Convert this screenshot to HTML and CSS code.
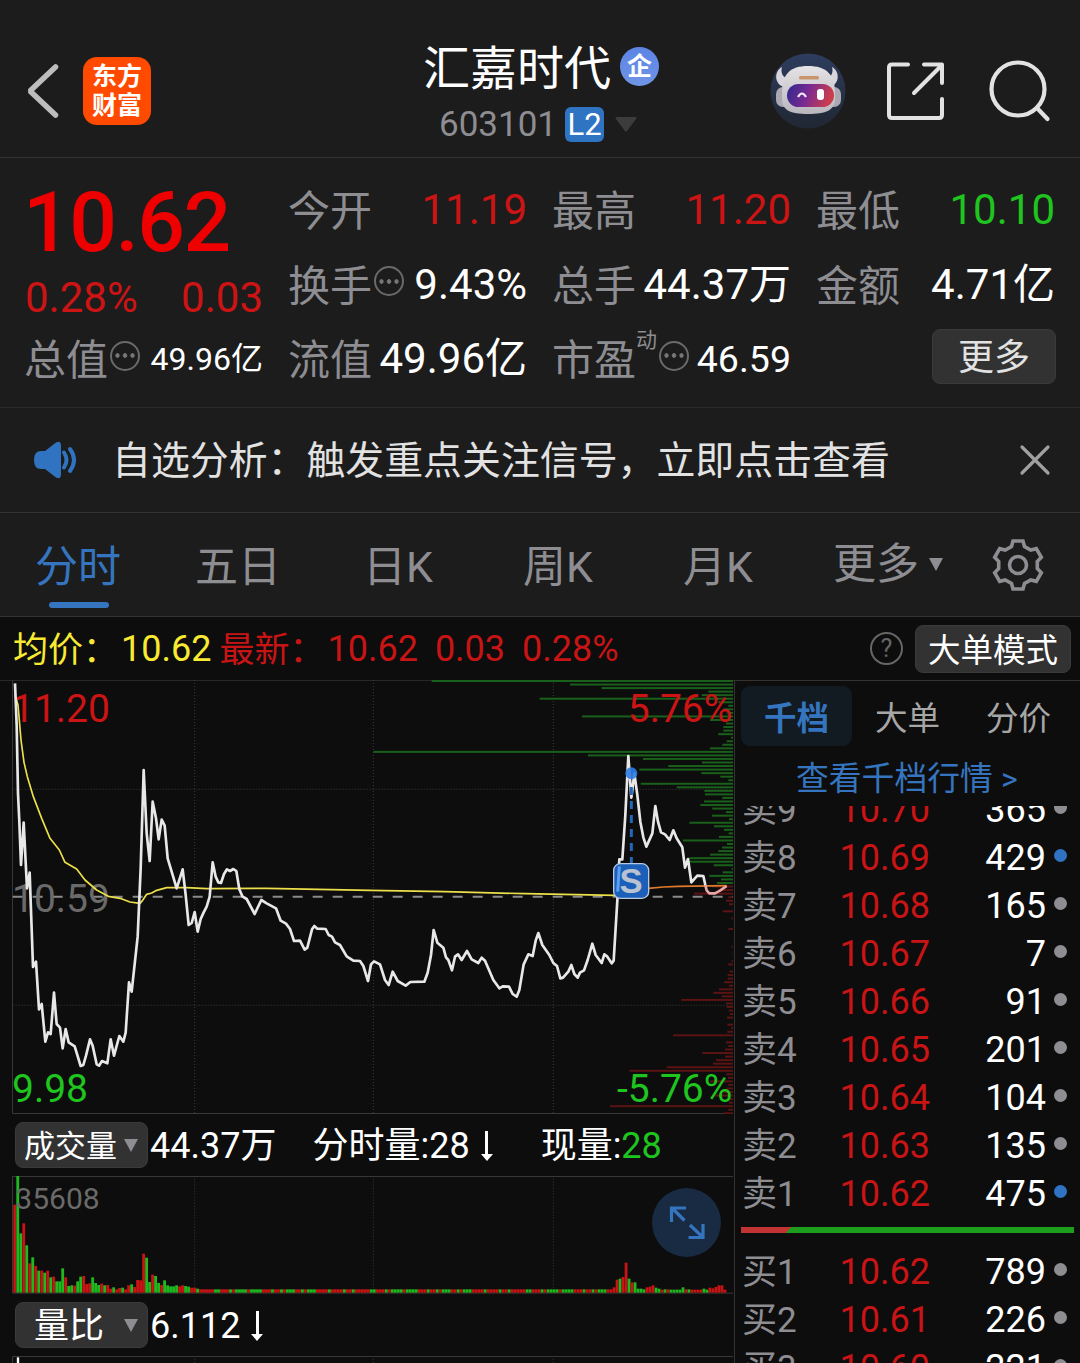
FILE: index.html
```html
<!DOCTYPE html>
<html lang="zh-CN">
<head>
  <meta charset="UTF-8">
  <meta name="viewport" content="width=device-width, initial-scale=1.0">
  <title>汇嘉时代 603101</title>
  <link rel="stylesheet" href="styles.css">
</head>
<body>
  <header class="header">
    <div class="header-left">
      <svg class="back" width="34" height="56" viewBox="0 0 34 56"><path d="M28.500 4 L3 28 L28.500 52" fill="none" stroke="#bdbdbd" stroke-width="5.500" stroke-linecap="round" stroke-linejoin="bevel"/></svg>
      <div class="logo"><span>东方</span><span>财富</span></div>
    </div>
    <div class="header-title">
      <div class="name-row">
        <h1>汇嘉时代</h1>
        <span class="badge">企</span>
      </div>
      <div class="code-row">
        <span class="code">603101</span>
        <span class="level">L2</span>
        <svg width="22" height="15" viewBox="0 0 22 15"><path d="M1 0H21Q22 1 21 2L12 14Q11 15 10 14L1 2Q0 1 1 0Z" fill="#3c3c3c"/></svg>
      </div>
    </div>
    <div class="header-actions">
      <svg width="76" height="76" viewBox="0 0 76 76">
        <defs>
          <linearGradient id="sky" x1="0" y1="0" x2="0" y2="1"><stop offset="0" stop-color="#2e3d5e"/><stop offset="1" stop-color="#202733"/></linearGradient>
          <linearGradient id="visor" x1="0" y1="0" x2="1" y2=".2"><stop offset="0" stop-color="#2c2a8c"/><stop offset=".5" stop-color="#7a2a92"/><stop offset="1" stop-color="#cc3d4c"/></linearGradient>
          <linearGradient id="helmet" x1="0" y1="0" x2="0" y2="1"><stop offset="0" stop-color="#e6e3e6"/><stop offset="1" stop-color="#b9b6be"/></linearGradient>
        </defs>
        <circle cx="38" cy="38" r="37.500" fill="url(#sky)"/>
        <path d="M12 14C4 18 4 31 14 34L21 26C14 26 10 21 12 14ZM62 14C70 18 70 31 60 34L53 26C60 26 64 21 62 14Z" fill="#d8d6dc"/>
        <rect x="6" y="34" width="14" height="20" rx="7" fill="#aaa9b1"/>
        <rect x="57" y="34" width="14" height="20" rx="7" fill="#aaa9b1"/>
        <path d="M12 40C12 21 20 13 38 13S65 21 65 40V46C65 57 56 61 38 61S12 57 12 46Z" fill="url(#helmet)"/>
        <rect x="29" y="23" width="20" height="3.500" rx="1.500" fill="#c9966c"/>
        <rect x="17" y="31" width="47" height="23" rx="11.500" fill="url(#visor)"/>
        <path d="M28 44Q32 37 36 44" fill="none" stroke="#f3e9ff" stroke-width="2.200"/>
        <rect x="47" y="36" width="7" height="11" rx="3" fill="#fff"/>
      </svg>
      <svg class="share" width="60" height="60" viewBox="0 0 60 60" fill="none" stroke="#e2e2e2" stroke-width="4" stroke-linecap="round" stroke-linejoin="round">
        <path d="M22 3.500H6Q3 3.500 3 6.500V54Q3 57 6 57H53Q56 57 56 54V38M38 3.500H56V22M56 4L28 32"/>
      </svg>
      <svg class="search" width="62" height="62" viewBox="0 0 62 62" fill="none" stroke="#e2e2e2" stroke-width="4.200" stroke-linecap="round">
        <circle cx="29" cy="29" r="26.500"/><path d="M48 48L58.500 59"/>
      </svg>
    </div>
  </header>

  <section class="quote">
    <div class="quote-col quote-main">
      <div class="price">10.62</div>
      <div class="row red"><span>0.28%</span><span>0.03</span></div>
      <div class="row"><span class="label">总值<i class="dots"></i></span><span class="value small">49.96亿</span></div>
    </div>
    <div class="quote-col">
      <div class="row"><span class="label">今开</span><span class="red">11.19</span></div>
      <div class="row"><span class="label">换手<i class="dots"></i></span><span class="value">9.43%</span></div>
      <div class="row"><span class="label">流值</span><span class="value">49.96亿</span></div>
    </div>
    <div class="quote-col">
      <div class="row"><span class="label">最高</span><span class="red">11.20</span></div>
      <div class="row"><span class="label">总手</span><span class="value">44.37万</span></div>
      <div class="row"><span class="label">市盈<sup>动</sup><i class="dots"></i></span><span class="value medium">46.59</span></div>
    </div>
    <div class="quote-col">
      <div class="row"><span class="label">最低</span><span class="green">10.10</span></div>
      <div class="row"><span class="label">金额</span><span class="value">4.71亿</span></div>
      <div class="row row-end"><button class="more">更多</button></div>
    </div>
  </section>

  <section class="notice">
    <svg width="46" height="38" viewBox="0 0 46 38">
      <path d="M8 10H12L23 1.500Q28 -1 28 5V33Q28 39 23 36.500L12 28H8Q1 28 1 19T8 10Z" fill="#3073c0"/>
      <path d="M31 11.500Q36 19 31 26.500M37 8Q45 19 37 30" fill="none" stroke="#3073c0" stroke-width="4" stroke-linecap="round"/>
    </svg>
    <p>自选分析：触发重点关注信号，立即点击查看</p>
    <svg class="close" width="32" height="32" viewBox="0 0 32 32"><path d="M3 3L29 29M29 3L3 29" stroke="#a0a0a0" stroke-width="3.200" stroke-linecap="round"/></svg>
  </section>

  <nav class="tabs">
    <a class="tab active">分时</a>
    <a class="tab">五日</a>
    <a class="tab">日K</a>
    <a class="tab">周K</a>
    <a class="tab">月K</a>
    <a class="tab tab-more">更多<i class="caret"></i></a>
    <svg class="gear" width="56" height="56" viewBox="-28 -28 56 56" fill="none" stroke="#8d8d92" stroke-width="3.600">
      <path d="M-5 -24H5L6.500 -18.500L12.800 -14.900L18.300 -16.300L23.300 -7.700L19.300 -3.600V3.600L23.300 7.700L18.300 16.300L12.800 14.900L6.500 18.500L5 24H-5L-6.500 18.500L-12.800 14.900L-18.300 16.300L-23.300 7.700L-19.300 3.600V-3.600L-23.300 -7.700L-18.300 -16.300L-12.800 -14.900L-6.500 -18.500Z"/>
      <circle r="8.500"/>
    </svg>
  </nav>

  <div class="strip">
    <span class="avg">均价：</span><span class="avg num">10.62</span>
    <span class="last">最新：</span><span class="last num">10.62</span><span class="last num">0.03</span><span class="last num">0.28%</span>
    <span class="help">?</span>
    <button class="mode">大单模式</button>
  </div>

  <main class="board">
    <div class="charts">
      <div class="chart price-chart">
        <!-- three user units per pixel -->
        <svg width="734" height="434" viewBox="0 15 2202 1302">
          <g class="grid">
            <path d="M584 15V1315M1120 15V1315M1660 15V1315M38 343H2199M38 991H2199"/>
          </g>
          <path class="frame" d="M0 15.500H2202M37.500 15V1315.500H2199"/>
          <g id="depth"></g>
          <path class="base" d="M38 665H2199"/>
          <text class="axis up" x="36" y="140">11.20</text>
          <text class="axis mid" x="36" y="710">10.59</text>
          <text class="axis down" x="36" y="1280">9.98</text>
          <polyline class="avg-line" points="45,60 54,90 63,195 72,262 82,305 100,365 125,430 150,490 178,525 195,562 230,582 255,615 290,645 325,664 360,670 390,681 420,685 428,676 440,658 455,654 470,646 500,638 560,638 620,641 800,640 1110,646 1335,650 1575,656 1845,661 1875,659 1905,647 1945,640"/>
          <polyline class="avg-line late" points="1945,640 1990,636 2035,634 2180,632"/>
          <polyline class="price-line" points="45,25 50,150 54,355 58,440 63,570 71,443 81,640 89,593 99,876 108,860 117,1003 125,987 136,1100 144,1072 152,1077 162,953 170,1047 180,1058 188,1120 197,1062 206,1102 224,1114 242,1173 250,1170 258,1142 270,1093 278,1112 290,1168 297,1172 306,1158 322,1165 332,1093 342,1142 358,1083 370,1100 377,1073 387,922 395,950 413,785 422,580 431,285 440,475 449,558 458,380 468,430 476,493 485,434 494,452 503,550 530,640 548,583 557,660 566,750 575,744 584,711 593,770 602,732 611,712 620,695 629,665 638,562 647,605 655,622 663,624 672,597 681,583 690,588 700,582 709,588 718,643 727,664 740,672 764,717 784,675 800,685 828,700 842,737 858,746 870,762 882,798 900,797 914,824 922,818 936,763 943,753 952,761 977,762 986,780 996,785 1005,802 1020,810 1040,844 1060,857 1080,858 1090,873 1104,918 1113,868 1122,859 1140,868 1155,915 1166,930 1178,890 1193,918 1217,932 1231,921 1273,920 1283,893 1293,840 1301,765 1312,803 1330,818 1338,847 1345,855 1356,886 1365,845 1374,838 1385,855 1401,828 1415,853 1435,864 1445,848 1455,857 1480,915 1498,940 1508,934 1527,935 1538,957 1550,965 1558,945 1571,868 1585,838 1598,843 1607,797 1615,774 1627,810 1648,840 1660,864 1671,873 1681,910 1689,908 1705,890 1714,870 1723,897 1733,908 1740,893 1752,886 1763,855 1777,806 1787,840 1805,864 1813,838 1822,845 1835,865 1841,857 1853,660 1858,553 1867,553 1876,420 1885,243 1894,368 1903,295 1912,360 1921,440 1930,487 1939,515 1957,475 1966,393 1974,440 1983,472 1995,478 2009,495 2020,466 2030,490 2047,517 2055,578 2064,552 2074,622 2092,602 2110,603 2116,630"/>
          <polyline class="price-line late" points="2116,630 2120,646 2128,655 2145,655 2160,647 2180,633"/>
          <text class="axis up end" x="2197" y="140">5.76%</text>
          <text class="axis down end" x="2197" y="1280">-5.76%</text>
          <!-- sell marker -->
          <path d="M1894 336V566" stroke="#2566b8" stroke-width="9" stroke-dasharray="24 18"/>
          <circle cx="1894" cy="295" r="18" fill="#2e7ce6" fill-opacity=".9"/>
          <rect x="1841" y="566" width="105" height="104" rx="20" fill="#1c5fb8" stroke="#b6c8e2" stroke-width="4"/>
          <path d="M1853 650L1858 574" stroke="#5c9df2" stroke-width="9"/>
          <text class="marker" x="1893" y="654">S</text>
        </svg>
      </div>

      <div class="indicator">
        <button class="picker">成交量<i class="caret"></i></button>
        <span class="figure">44.37万</span>
        <span class="figure minute">分时量:28</span><i class="arrow"></i>
        <span class="figure now">现量:<b>28</b></span>
      </div>

      <div class="chart volume-chart">
        <svg width="734" height="118" viewBox="0 0 2202 354">
          <path class="grid" d="M584 8V350M1120 8V350M1660 8V350"/>
          <path class="frame" d="M37.500 1.500H2199M37.500 0V351.500H2199"/>
          <g id="volume"></g>
          <text class="axis scale" x="46" y="98">35608</text>
        </svg>
        <div class="expand">
          <svg width="36" height="36" viewBox="0 0 36 36" fill="none" stroke="#3575bf" stroke-width="3.200"><path d="M2.500 17V3H17M3 3L15.500 15.500M19.500 32.500H34V19M33.500 32L21 20"/></svg>
        </div>
      </div>

      <div class="indicator second">
        <button class="picker wide">量比<i class="caret"></i></button>
        <span class="figure">6.112</span><i class="arrow near"></i>
      </div>

      <div class="chart ratio-chart">
        <svg width="734" height="8" viewBox="0 0 2202 24">
          <path class="grid" d="M584 8V24M1120 8V24M1660 8V24"/>
          <path class="frame" d="M37.500 24V1.500H2199"/>
          <path d="M54 4V24" stroke="#fff" stroke-width="7"/>
        </svg>
      </div>
    </div>

    <aside class="book">
      <div class="book-tabs">
        <a class="book-tab active">千档</a>
        <a class="book-tab">大单</a>
        <a class="book-tab">分价</a>
      </div>
      <a class="book-link">查看千档行情 <span>&gt;</span></a>
      <div class="orders sells">
        <div class="order"><span>卖9</span><span>10.70</span><span>365</span><i></i></div>
        <div class="order"><span>卖8</span><span>10.69</span><span>429</span><i class="big"></i></div>
        <div class="order"><span>卖7</span><span>10.68</span><span>165</span><i></i></div>
        <div class="order"><span>卖6</span><span>10.67</span><span>7</span><i></i></div>
        <div class="order"><span>卖5</span><span>10.66</span><span>91</span><i></i></div>
        <div class="order"><span>卖4</span><span>10.65</span><span>201</span><i></i></div>
        <div class="order"><span>卖3</span><span>10.64</span><span>104</span><i></i></div>
        <div class="order"><span>卖2</span><span>10.63</span><span>135</span><i></i></div>
        <div class="order"><span>卖1</span><span>10.62</span><span>475</span><i class="big"></i></div>
      </div>
      <div class="balance"></div>
      <div class="orders">
        <div class="order"><span>买1</span><span>10.62</span><span>789</span><i></i></div>
        <div class="order"><span>买2</span><span>10.61</span><span>226</span><i></i></div>
        <div class="order"><span>买3</span><span>10.60</span><span>221</span><i></i></div>
      </div>
    </aside>
  </main>

  <script src="charts.js"></script>
</body>
</html>
```

FILE: styles.css
```css
/* Base styling */
* {
  box-sizing: border-box;
}
body {
  margin: 0;
  width: 1080px;
  height: 1363px;
  overflow: hidden;
  background: #0d0d0d;
  color: #fff;
  font-family: Roboto, "Noto Sans CJK SC", sans-serif;
  font-size: 36px;
  line-height: 1;
}
h1, p {
  margin: 0;
  font-weight: 400;
}
button {
  border: 1px solid #3a3a3a;
  border-radius: 8px;
  padding: 0;
  background: #323232;
  color: #fff;
  font-family: inherit;
  line-height: 1;
}
svg {
  display: block;
  flex: none;
}
.red {
  color: #cc1414;
}
.green {
  color: #1fc41f;
}

/* Header */
.header {
  display: grid;
  grid-template-columns: 396px 344px 1fr;
  height: 158px;
  padding-left: 27px;
  background: #1c1c1c;
  border-bottom: 1px solid #333;
}
.header-left {
  display: flex;
  align-items: center;
  gap: 22px;
  padding-top: 24px;
}
.logo {
  display: flex;
  flex-direction: column;
  align-items: center;
  justify-content: center;
  gap: 4px;
  width: 68px;
  height: 68px;
  border-radius: 14px;
  background: #ff4a00;
  font-size: 25px;
  font-weight: 700;
}
.header-title {
  padding-top: 42px;
}
.name-row {
  display: flex;
  align-items: center;
  gap: 9px;
  height: 49px;
}
.name-row h1 {
  padding-top: 3px;
  font-size: 47px;
  white-space: nowrap;
}
.badge {
  width: 39px;
  height: 39px;
  border-radius: 50%;
  background: linear-gradient(#5b84e4, #7095e6);
  font-size: 25px;
  font-weight: 700;
  line-height: 39px;
  text-align: center;
}
.code-row {
  display: flex;
  align-items: center;
  height: 36px;
  margin-top: 15px;
  padding-left: 16px;
}
.code {
  width: 126px;
  padding-top: 1px;
  color: #8d8d92;
  font-size: 35px;
}
.level {
  width: 39px;
  height: 35px;
  margin-right: 11px;
  border-radius: 6px;
  background: #2f74c2;
  font-size: 31px;
  line-height: 36px;
  text-align: center;
}
.header-actions {
  display: flex;
  align-items: center;
  padding: 24px 0 0 3px;
}
.share {
  margin-left: 40px;
}
.search {
  margin-left: 43px;
}

/* Quote numbers */
.quote {
  display: grid;
  grid-template-columns: repeat(4, 238px);
  column-gap: 26px;
  height: 250px;
  padding: 15px 25px 0;
  background: #1c1c1c;
  border-bottom: 1px solid #2a2a2a;
  font-size: 42px;
}
.row {
  display: flex;
  align-items: center;
  justify-content: space-between;
  height: 74.500px;
  white-space: nowrap;
}
.row-end {
  justify-content: flex-end;
}
.label {
  display: flex;
  align-items: center;
  margin-left: -1px;
  padding-top: 4px;
  color: #8d8d92;
}
.label sup {
  align-self: flex-start;
  margin-top: -10px;
  font-size: 21px;
  line-height: 1;
}
.quote-main {
  padding-top: 6px;
}
.quote-main .row {
  height: 61.500px;
}
.price {
  height: 88px;
  margin-left: -2px;
  color: #ee0000;
  font-size: 84px;
  font-weight: 500;
  letter-spacing: -1.500px;
  line-height: 88px;
}
.small {
  font-size: 32px;
}
.medium {
  font-size: 37.500px;
}
.dots {
  width: 30px;
  height: 30px;
  margin: -11px 0 0 2px;
  border: 2.500px solid #6a6a6a;
  border-radius: 50%;
  background: radial-gradient(circle, #777 2px, transparent 2.500px) center / 7.500px 25px repeat-x;
  background-clip: content-box;
  padding: 0 2px;
}
.more {
  width: 124px;
  height: 55px;
  margin: -5px -1px 0 0;
  padding-top: 3px;
  color: #e2e2e2;
  font-size: 36px;
}

/* Notice */
.notice {
  display: flex;
  align-items: center;
  height: 105px;
  padding-left: 33px;
  background: #1c1c1c;
  border-bottom: 1px solid #333;
}
.notice p {
  width: 940px;
  padding: 3px 0 0 33px;
  color: #e2e2e2;
  font-size: 38.900px;
}

/* Period tabs */
.tabs {
  display: flex;
  align-items: center;
  height: 104px;
  background: #1c1c1c;
  border-bottom: 1px solid #333;
}
.tab {
  position: relative;
  width: 160px;
  height: 103px;
  color: #8d8d92;
  font-size: 43px;
  line-height: 109px;
  text-align: center;
}
.tab:first-child {
  margin-left: -2px;
}
.tab.active {
  color: #3575bf;
}
.tab.active::after {
  content: "";
  position: absolute;
  left: 51px;
  bottom: 8px;
  width: 60px;
  height: 6px;
  border-radius: 3px;
  background: #3575bf;
}
.tab-more {
  display: flex;
  align-items: center;
  padding-left: 35px;
  width: 192px;
}
.caret {
  width: 0;
  height: 0;
  border: 7.500px solid transparent;
  border-top: 13px solid #8d8d92;
  border-bottom: 0;
}
.tab-more .caret {
  margin-left: 10px;
}

/* Average and last price */
.strip {
  display: flex;
  align-items: center;
  height: 63px;
  padding-left: 13px;
  white-space: nowrap;
}
.avg {
  color: #f8ea32;
}
.last {
  color: #c81414;
}
.strip > span {
  padding-top: 3px;
  font-size: 35px;
}
.strip .num {
  margin-right: 17px;
  padding-top: 1px;
  font-size: 36px;
}
.strip .avg.num {
  margin: 0 8px 0 3px;
}
.strip .last:not(.num) {
  margin-right: 3px;
}
.strip .help {
  width: 33px;
  height: 33px;
  margin: 0 12px 0 auto;
  padding-top: 0;
  border: 2.500px solid #666;
  border-radius: 50%;
  color: #666;
  font-size: 25px;
  line-height: 29px;
  text-align: center;
}
.mode {
  width: 156px;
  height: 48px;
  margin-right: 9px;
  padding-top: 5px;
  font-size: 32.500px;
}

/* Charts */
.board {
  display: flex;
}
.charts {
  width: 735px;
  border-right: 1px solid #333;
}
.grid {
  fill: none;
  stroke: #3c3c3c;
  stroke-width: 3;
  stroke-dasharray: 3 6;
}
.frame {
  fill: none;
  stroke: #383838;
  stroke-width: 3;
}
.base {
  stroke: #8a8a8a;
  stroke-width: 6;
  stroke-dasharray: 30 30;
}
.price-line, .avg-line {
  fill: none;
  stroke: #e8e8e8;
  stroke-width: 8;
  stroke-linejoin: round;
}
.price-line.late {
  stroke: #e8a8a8;
}
.avg-line {
  stroke: #ece04a;
  stroke-width: 5;
}
.avg-line.late {
  stroke: #e07a2c;
}
.axis {
  font-size: 117px;
}
.axis.up {
  fill: #cc1414;
}
.axis.down {
  fill: #1fc41f;
}
.axis.mid, .axis.scale {
  fill: #6a6a6a;
}
.axis.end {
  text-anchor: end;
}
.axis.scale {
  font-size: 90px;
}
.marker {
  fill: #b9c2d0;
  font-family: "Liberation Sans", sans-serif;
  font-size: 104px;
  font-weight: 700;
  text-anchor: middle;
}
.indicator {
  display: flex;
  align-items: center;
  height: 62px;
  padding-left: 15px;
  white-space: nowrap;
}
.picker {
  display: flex;
  align-items: center;
  justify-content: space-between;
  width: 133px;
  height: 46px;
  margin-right: 2px;
  padding: 3px 9px 0 8px;
  font-size: 31px;
}
.picker .caret {
  margin-top: -3px;
}
.picker.wide {
  padding-left: 18px;
  font-size: 35px;
}
.figure {
  padding-top: 1px;
}
.figure.minute {
  margin-left: 36px;
}
.figure.now {
  margin-left: 48px;
}
.figure b {
  color: #1fc41f;
  font-weight: 400;
}
.arrow {
  position: relative;
  width: 12px;
  height: 32px;
  margin-left: 11px;
  background: linear-gradient(#fff, #fff) center / 3px 28px no-repeat;
}
.arrow::after {
  content: "";
  position: absolute;
  left: 0;
  bottom: 0;
  border: 6px solid transparent;
  border-top: 7px solid #fff;
  border-bottom: 0;
}
.volume-chart {
  position: relative;
}
.expand {
  position: absolute;
  left: 652px;
  top: 12px;
  display: flex;
  align-items: center;
  justify-content: center;
  width: 69px;
  height: 69px;
  border-radius: 50%;
  background: #182b42;
}

/* Order book */
.book {
  width: 345px;
  height: 683px;
  overflow: hidden;
  border-top: 1px solid #333;
}
.book-tabs {
  display: flex;
  padding: 5px 0 0 6px;
}
.book-tab {
  width: 111px;
  height: 60px;
  border-radius: 9px;
  color: #a6a6a6;
  font-size: 32.500px;
  line-height: 67px;
  text-align: center;
}
.book-tab.active {
  background: #121a22;
  color: #3575bf;
  font-weight: 700;
}
.book-link {
  display: block;
  height: 60px;
  padding-left: 61px;
  color: #3575bf;
  font-size: 32.800px;
  line-height: 67px;
  white-space: nowrap;
}
.book-link span {
  font-size: 32px;
}
.orders {
  overflow: hidden;
}
.sells .order:first-child {
  margin-top: -21px;
}
.order {
  display: grid;
  grid-template-columns: 88px 100px 116px 13px;
  align-items: center;
  height: 48px;
  padding: 2px 0 0 7px;
}
.order span {
  text-align: right;
}
.order span:first-child {
  color: #8d8d92;
  font-size: 35px;
  text-align: left;
}
.order span:nth-child(2) {
  color: #c81414;
}
.order i {
  width: 13px;
  height: 13px;
  margin: -6px 0 0 8px;
  border-radius: 50%;
  background: #8d8d92;
}
.order i.big {
  background: #2f74c2;
}
.balance {
  width: 333px;
  height: 6px;
  margin: 10px 0 14px 6px;
  background: linear-gradient(135deg, #c23434 36px, #1c9e1c 36px);
}
```

FILE: charts.js
```js
const SVG_NS = 'http://www.w3.org/2000/svg';

function addRect(parent, x, y, width, height, fill) {
  const rect = document.createElementNS(SVG_NS, 'rect');
  rect.setAttribute('x', x);
  rect.setAttribute('y', y);
  rect.setAttribute('width', width);
  rect.setAttribute('height', height);
  rect.setAttribute('fill', fill);
  parent.appendChild(rect);
}

// Queue size at every price level, from the top of the chart down
const asks = [
  904, 489, 394, 74, 94, 580, 44, 14, 29, 19, 453, 69, 21, 29, 29, 44, 6, 19, 32, 69,
  1079, 435, 270, 93, 194, 281, 95, 38, 14, 277, 169, 86, 84, 32, 87, 98, 62, 21, 63, 12,
  131, 57, 27, 13, 42, 150, 18, 33, 44, 69, 131, 149, 58, 4, 31, 71, 36, 48
];
const bids = [
  64, 44, 117, 14, 21, 12, 0, 31, 0, 5, 0, 0, 14, 0, 0, 0, 0, 4, 0, 2,
  0, 4, 14, 0, 10, 16, 16, 27, 12, 42, 59, 33, 155, 21, 19, 13, 9, 18, 0, 17,
  6, 17, 180, 0, 21, 14, 24, 92, 24, 51, 60, 199, 311, 21, 15, 69, 14, 19, 29, 54,
  14, 12, 369, 14, 28
];
const depth = document.getElementById('depth');
const rightEdge = 2199;
const levelStep = 10.63;
asks.concat(bids).forEach((size, i) => {
  const color = i < asks.length ? '#19601b' : '#5c1313';
  addRect(depth, rightEdge - size, 15 + i * levelStep, size, 6, color);
});

// Minute volume: r = up, g = down, followed by the bar height
const opening = 'r264 g350 g178 r208 g142 r88 g106 r80 g66 r66 g60 r66 g46 r48 g34 g34 g73 r46 g20 g22 r21 g34 g48 r50 r26 r28 g46 g29 g23 r27 g22 r23 r12 g16 r10 r14 g15 r10 r22 g25 r17 r38 r37 r117 g105 g32 r54 g50 g29 r23 g37 g22 g19 g19 g22 r19 r22 g20 g18 r15 r15 g12';
const quiet = 'rrrrrggrrrgrggggrggggrrrgrrgrgggrrgrgggrrrrgrrrrgrrg';
const closing = 'r10 r16 r39 g42 r47 r90 g42 r31 g31 g12 g12 g10 r16 r18 r22 g15 g12 r9 g10 r10 g9 g9 g9 g9 g16 r10 g10 r9 r9 r9 r9 g12 g9 r15 r13 r17 r22 r22 r9';

const bars = opening.split(' ');
const tail = closing.split(' ');
const minutes = 238;
for (let i = 0; bars.length < minutes - tail.length; i++) {
  bars.push(quiet[i % quiet.length] + '10');
}
const volume = document.getElementById('volume');
bars.concat(tail).forEach((bar, i) => {
  const height = Number(bar.slice(1));
  const color = bar[0] === 'r' ? '#c81414' : '#1fb81f';
  addRect(volume, 40 + i * 8.99, 350 - height, 8.5, height, color);
});
```
